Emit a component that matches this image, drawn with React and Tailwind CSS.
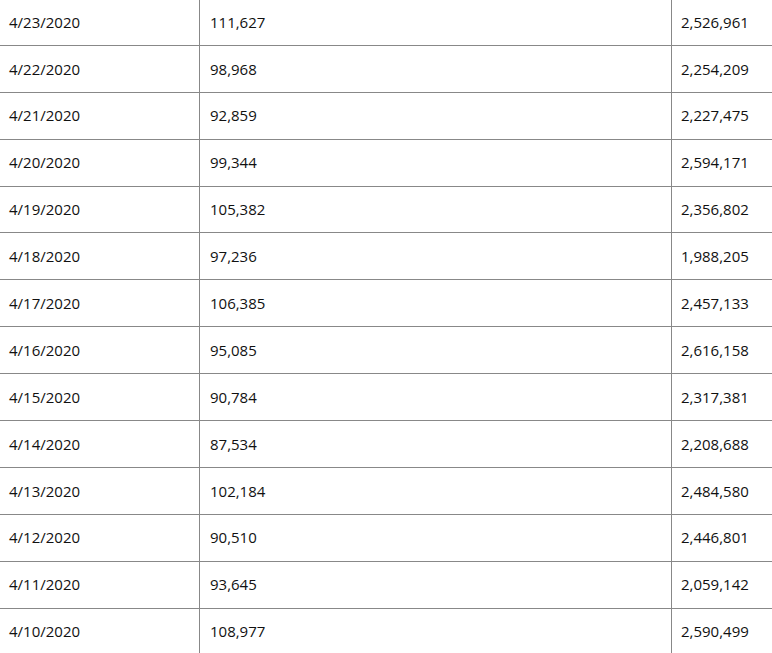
const ROWS = [
  ['4/23/2020', '111,627', '2,526,961'],
  ['4/22/2020', '98,968', '2,254,209'],
  ['4/21/2020', '92,859', '2,227,475'],
  ['4/20/2020', '99,344', '2,594,171'],
  ['4/19/2020', '105,382', '2,356,802'],
  ['4/18/2020', '97,236', '1,988,205'],
  ['4/17/2020', '106,385', '2,457,133'],
  ['4/16/2020', '95,085', '2,616,158'],
  ['4/15/2020', '90,784', '2,317,381'],
  ['4/14/2020', '87,534', '2,208,688'],
  ['4/13/2020', '102,184', '2,484,580'],
  ['4/12/2020', '90,510', '2,446,801'],
  ['4/11/2020', '93,645', '2,059,142'],
  ['4/10/2020', '108,977', '2,590,499'],
];

export default function App() {
  return (
    <div className="h-[653px] w-[772px] overflow-hidden bg-white font-['Open_Sans',sans-serif] text-[15px] text-[#111]">
      <div className="-mt-[1px]">
        {ROWS.map(([date, daily, total]) => (
          <div key={date} className="flex h-[46.9px] border-b border-[#888]">
            <div className="flex w-[200px] shrink-0 items-center border-r border-[#888] pl-[9px]">{date}</div>
            <div className="flex w-[472px] shrink-0 items-center border-r border-[#888] pl-[10px]">{daily}</div>
            <div className="flex flex-1 items-center pl-[9px]">{total}</div>
          </div>
        ))}
      </div>
    </div>
  );
}
